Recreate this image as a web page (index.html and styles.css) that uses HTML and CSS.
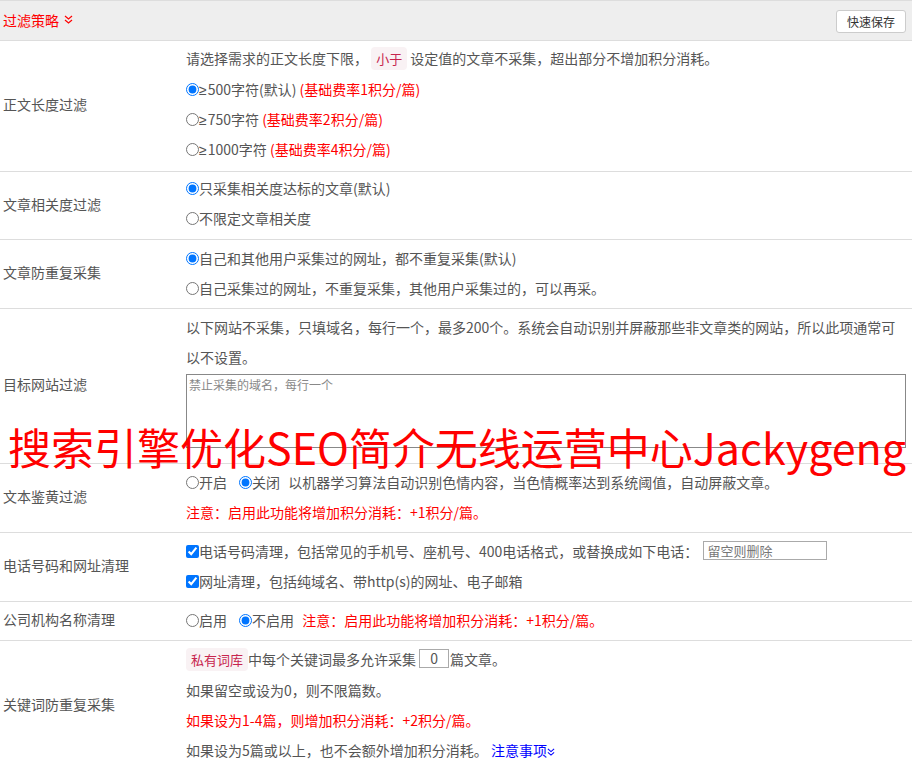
FILE: index.html
```html
<!DOCTYPE html>
<html lang="zh-CN">
<head>
<meta charset="utf-8">
<title>过滤策略</title>
<link rel="stylesheet" href="styles.css">
</head>
<body>
<div class="panel">
  <div class="panel-head">
    <span class="panel-title">过滤策略
      <svg class="chev" width="9" height="9" viewBox="0 0 9 9"><polyline points="1,1 4.5,4 8,1" fill="none" stroke="#f00" stroke-width="1.2"/><polyline points="1,5 4.5,8 8,5" fill="none" stroke="#f00" stroke-width="1.2"/></svg>
    </span>
    <button class="btn-save">快速保存</button>
  </div>

  <div class="row row-a">
    <div class="label">正文长度过滤</div>
    <div class="content">
      <div>请选择需求的正文长度下限， <code class="tag">小于</code> 设定值的文章不采集，超出部分不增加积分消耗。</div>
      <div><label><input type="radio" name="len" checked><span class="ge">≥</span>500字符(默认) <span class="red">(基础费率1积分/篇)</span></label></div>
      <div><label><input type="radio" name="len"><span class="ge">≥</span>750字符 <span class="red">(基础费率2积分/篇)</span></label></div>
      <div><label><input type="radio" name="len"><span class="ge">≥</span>1000字符 <span class="red">(基础费率4积分/篇)</span></label></div>
    </div>
  </div>

  <div class="row row-b">
    <div class="label">文章相关度过滤</div>
    <div class="content">
      <div><label><input type="radio" name="rel" checked>只采集相关度达标的文章(默认)</label></div>
      <div><label><input type="radio" name="rel">不限定文章相关度</label></div>
    </div>
  </div>

  <div class="row">
    <div class="label">文章防重复采集</div>
    <div class="content">
      <div><label><input type="radio" name="dup" checked>自己和其他用户采集过的网址，都不重复采集(默认)</label></div>
      <div><label><input type="radio" name="dup">自己采集过的网址，不重复采集，其他用户采集过的，可以再采。</label></div>
    </div>
  </div>

  <div class="row row-site">
    <div class="label">目标网站过滤</div>
    <div class="content">
      <div>以下网站不采集，只填域名，每行一个，最多200个。系统会自动识别并屏蔽那些非文章类的网站，所以此项通常可以不设置。</div>
      <textarea class="domains" placeholder="禁止采集的域名，每行一个"></textarea>
    </div>
  </div>

  <div class="row">
    <div class="label">文本鉴黄过滤</div>
    <div class="content">
      <div><label class="opt"><input type="radio" name="porn">开启</label><label class="opt opt-last"><input type="radio" name="porn" checked>关闭</label> 以机器学习算法自动识别色情内容，当色情概率达到系统阈值，自动屏蔽文章。</div>
      <div class="red">注意：启用此功能将增加积分消耗：+1积分/篇。</div>
    </div>
  </div>

  <div class="row">
    <div class="label">电话号码和网址清理</div>
    <div class="content">
      <div><label><input type="checkbox" checked>电话号码清理，包括常见的手机号、座机号、400电话格式，或替换成如下电话：</label> <input type="text" class="phone" placeholder="留空则删除"></div>
      <div><label><input type="checkbox" checked>网址清理，包括纯域名、带http(s)的网址、电子邮箱</label></div>
    </div>
  </div>

  <div class="row">
    <div class="label">公司机构名称清理</div>
    <div class="content">
      <div><label class="opt"><input type="radio" name="org">启用</label><label class="opt opt-last"><input type="radio" name="org" checked>不启用</label> <span class="red">注意：启用此功能将增加积分消耗：+1积分/篇。</span></div>
    </div>
  </div>

  <div class="row row-last">
    <div class="label">关键词防重复采集</div>
    <div class="content">
      <div><code class="tag">私有词库</code>中每个关键词最多允许采集<input type="text" class="num" value="0">篇文章。</div>
      <div>如果留空或设为0，则不限篇数。</div>
      <div class="red">如果设为1-4篇，则增加积分消耗：+2积分/篇。</div>
      <div>如果设为5篇或以上，也不会额外增加积分消耗。 <a class="link" href="#">注意事项<svg class="chev" width="8" height="8" viewBox="0 0 9 9"><polyline points="1,1 4.5,4 8,1" fill="none" stroke="#00f" stroke-width="1.2"/><polyline points="1,5 4.5,8 8,5" fill="none" stroke="#00f" stroke-width="1.2"/></svg></a></div>
    </div>
  </div>
</div>

<div class="mask"></div>
<div class="watermark">搜索引擎优化SEO简介无线运营中心Jackygeng</div>
</body>
</html>
```

FILE: styles.css
```css
* { box-sizing: border-box; }
html, body { margin: 0; padding: 0; background: #fff; }
body {
  font-family: "Noto Sans CJK SC", "Noto Sans", sans-serif;
  font-size: 14px;
  color: #555;
  position: relative;
}
.panel-head {
  height: 41px;
  background: #eee;
  border-top: 1px solid #ddd;
  border-bottom: 1px solid #ddd;
  display: flex;
  align-items: center;
  justify-content: space-between;
  padding: 0 6px 0 3px;
}
.panel-title { color: #f00; font-size: 14px; display: flex; align-items: center; gap: 5px; padding-bottom: 2px; }
.chev { display: inline-block; }
.btn-save {
  font-family: inherit;
  font-size: 12px;
  color: #333;
  background: #fff;
  border: 1px solid #ccc;
  border-radius: 3px;
  width: 70px;
  height: 23px;
  padding: 0;
  margin-top: 1px;
}
.row {
  display: grid;
  grid-template-columns: 186px 1fr;
  border-bottom: 1px solid #ddd;
}
.label {
  display: flex;
  align-items: center;
  padding-left: 3px;
  padding-bottom: 4px;
}
.content {
  line-height: 30px;
  padding: 3px 0 5px;
  white-space: nowrap;
}
.row-a .content { padding: 2px 0 7px; }
.row-b .content { padding: 1px 0 6px; }
.row-site .content { padding: 3px 6px 15px 0; white-space: normal; }
.row-last { border-bottom: none; }
input[type=radio], input[type=checkbox] {
  margin: 0;
  width: 13px;
  height: 13px;
  vertical-align: -1px;
}
.ge {
  font-family: "Liberation Sans", "DejaVu Sans", sans-serif;
  line-height: 0;
  margin-right: 1px;
}
.opt { margin-right: 12px; }
.opt.opt-last { margin-right: 5px; }
.red { color: #f00; }
.tag {
  font-family: inherit;
  font-size: 13px;
  color: #c7254e;
  background: #f9f2f4;
  border-radius: 4px;
  padding: 2px 5px;
}
.domains {
  display: block;
  width: 720px;
  height: 74px;
  margin-top: 2px;
  background: transparent;
  border: 1px solid #888;
  font-family: inherit;
  font-size: 12px;
  padding: 1px 2px;
  resize: none;
}
.domains::placeholder { color: #888; }
.phone {
  width: 124px;
  height: 19px;
  border: 1px solid #aaa;
  font-family: inherit;
  font-size: 13px;
  padding: 0 3px;
  margin-left: 2px;
  vertical-align: 1px;
}
.phone::placeholder { color: #777; }
.num {
  width: 30px;
  height: 19px;
  border: 1px solid #aaa;
  font-family: inherit;
  font-size: 14px;
  color: #555;
  text-align: center;
  padding: 0;
  margin: 0 1px 0 3px;
  vertical-align: 1px;
}
.link { color: #00f; text-decoration: none; }
.mask {
  position: absolute;
  left: 15px;
  top: 340px;
  width: 883px;
  height: 88px;
  background: #ccc;
  z-index: -1;
}
.watermark {
  position: absolute;
  left: 8px;
  top: 418px;
  font-size: 43px;
  line-height: 56px;
  color: #f00;
  white-space: nowrap;
}
```
